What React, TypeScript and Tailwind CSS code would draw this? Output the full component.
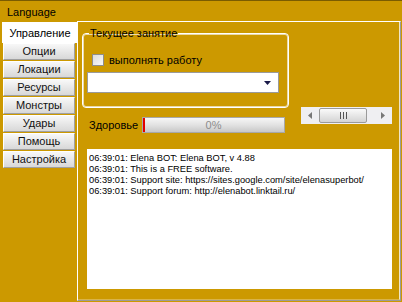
import React from "react";

const tabs = ["Опции", "Локации", "Ресурсы", "Монстры", "Удары", "Помощь", "Настройка"];
const log = [
  "06:39:01: Elena BOT: Elena BOT, v 4.88",
  "06:39:01: This is a FREE software.",
  "06:39:01: Support site: https://sites.google.com/site/elenasuperbot/",
  "06:39:01: Support forum: http://elenabot.linktail.ru/",
];

export default function App() {
  return (
    <div
      className="w-[402px] h-[302px] bg-[#cc9900] flex flex-col overflow-hidden text-black"
      style={{ fontFamily: '"Liberation Sans", Arial, sans-serif' }}
    >
      {/* menu bar */}
      <div className="h-[21px] border-t border-[#7a5c00] flex items-center pl-[7px] pt-[3px] text-[11px] leading-none">
        Language
      </div>
      <div className="flex flex-1 min-h-0">
        {/* tabs column */}
        <div className="w-[77px] flex flex-col pt-[1px]">
          <div className="ml-[2px] h-[21px] bg-white border-t border-l border-white flex items-center justify-center text-[11px] leading-none">
            Управление
          </div>
          <div className="flex flex-col gap-[1px] ml-[3px] w-[72px]">
            {tabs.map((t) => (
              <div
                key={t}
                className="h-[17px] flex items-center justify-center text-[11px] leading-none text-[#111] bg-gradient-to-b from-[#f8f8f8] to-[#d8d8d8] border-t border-l border-t-white border-l-white border-r border-b border-r-[#a0a0a0] border-b-[#a0a0a0]"
              >
                {t}
              </div>
            ))}
          </div>
        </div>
        {/* tab page */}
        <div className="w-[324px] mb-[1px] border-t border-l border-white border-r border-b border-r-[#9a9a9a] border-b-[#9a9a9a] flex flex-col">
          <div className="flex-1 border-r border-b border-r-[#f0e6c8] border-b-[#d9b44a] flex flex-col">
            <div className="flex">
              {/* left column */}
              <div className="flex flex-col pl-[4px] w-[207px]">
                <fieldset className="mt-[5px] w-[202px] h-[81px] border border-white rounded-[4px] shadow-[inset_0_0_0_1px_#ead9a8] px-[9px]">
                  <legend className="text-[11px] leading-[13px] px-[1px] -ml-[3px]">Текущее занятие</legend>
                  <div className="flex items-center mt-[13px] h-[14px]">
                    <div className="w-[12px] h-[12px] border border-[#8e8e8e] bg-gradient-to-br from-[#dcdcdc] to-[#f8f8f8]" />
                    <span className="ml-[5px] text-[11px] leading-none">выполнять работу</span>
                  </div>
                  <div className="mt-[5px] -ml-[5px] w-[192px] h-[21px] bg-white border border-[#9a9a9a] flex items-center justify-end pr-[7px]">
                    <svg width="7" height="4" viewBox="0 0 7 4">
                      <path d="M0 0 H7 L3.5 4 Z" fill="#1a1a4a" />
                    </svg>
                  </div>
                </fieldset>
                <div className="flex items-center mt-[9px] pl-[7px]">
                  <span className="text-[11px] leading-none w-[53px]">Здоровье</span>
                  <div className="relative w-[143px] h-[16px] border border-[#a8a8a8] bg-gradient-to-b from-[#f6f6f6] via-[#e2e2e2] to-[#c8c8c8] flex items-center justify-center">
                    <div className="absolute left-0 top-0 bottom-0 w-[2px] bg-[#e40000]" />
                    <span className="text-[11px] leading-none text-[#8c8c8c]">0%</span>
                  </div>
                </div>
              </div>
              {/* scrollbar */}
              <div className="ml-[16px] mt-[85px] w-[91px] h-[17px] bg-[#efeff2] flex items-center">
                <div className="w-[18px] flex items-center justify-center">
                  <svg width="4" height="7" viewBox="0 0 4 7">
                    <path d="M4 0 V7 L0 3.5 Z" fill="#777" />
                  </svg>
                </div>
                <div className="w-[48px] h-[15px] rounded-[2px] border border-[#9a9a9a] bg-gradient-to-b from-[#fafafa] to-[#d4d4d4] flex items-center justify-center gap-[2px]">
                  <div className="w-[1px] h-[7px] bg-[#555]" />
                  <div className="w-[1px] h-[7px] bg-[#555]" />
                  <div className="w-[1px] h-[7px] bg-[#555]" />
                </div>
                <div className="flex-1 flex items-center justify-end pr-[7px]">
                  <svg width="4" height="7" viewBox="0 0 4 7">
                    <path d="M0 0 V7 L4 3.5 Z" fill="#777" />
                  </svg>
                </div>
              </div>
            </div>
            {/* log */}
            <div className="ml-[9px] mt-[16px] w-[305px] h-[140px] bg-white pt-[4px] pl-[2px]">
              {log.map((l) => (
                <div key={l} className="text-[9.3px] leading-[11px] whitespace-nowrap">
                  {l}
                </div>
              ))}
            </div>
          </div>
        </div>
      </div>
    </div>
  );
}
